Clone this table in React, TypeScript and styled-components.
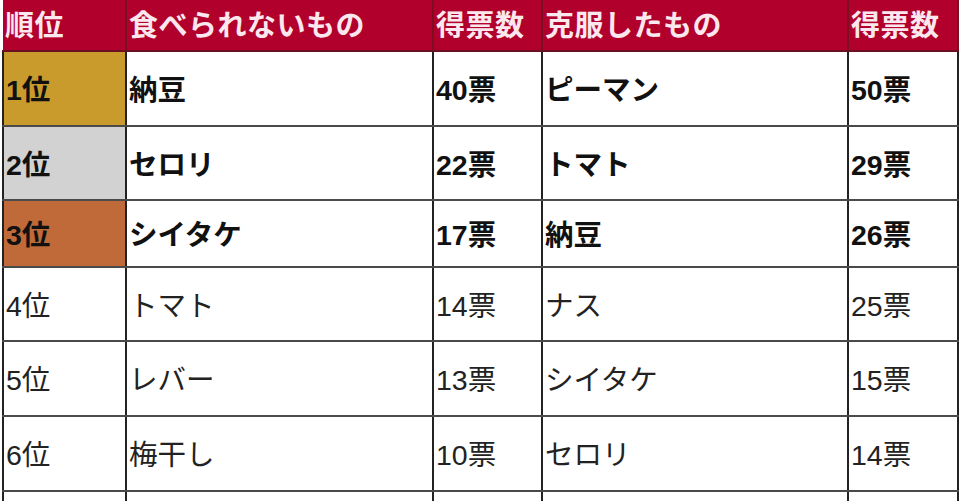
import React from "react";
import styled, { createGlobalStyle } from "styled-components";

const GlobalStyle = createGlobalStyle`
  html, body {
    margin: 0;
    padding: 0;
    background: #ffffff;
    overflow: hidden;
  }
`;

const Page = styled.div`
  width: 960px;
  height: 501px;
  overflow: hidden;
  padding-left: 2px;
  box-sizing: border-box;
`;

const Table = styled.table`
  border-collapse: collapse;
  table-layout: fixed;
  width: 955px;
  font-family: "Liberation Sans", "Noto Sans CJK JP", sans-serif;
  color: #111;
`;

const HeadCell = styled.th`
  background: #b1002c;
  color: #fbe8ee;
  font-size: 29px;
  font-weight: 700;
  text-align: left;
  padding: 0 0 4px 2px;
  height: 46px;
  border-right: 2px solid #7a0f22;
  border-bottom: 2px solid #6a1020;
  white-space: nowrap;
  overflow: hidden;
  letter-spacing: 0.5px;
`;

const Cell = styled.td<{ $bold?: boolean; $bg?: string }>`
  background: ${(p) => p.$bg || "#ffffff"};
  font-size: 28.5px;
  font-weight: ${(p) => (p.$bold ? 700 : 400)};
  color: ${(p) => (p.$bold ? "#111" : "#222")};
  text-align: left;
  padding: 0 0 2px 2px;
  border: 2px solid #4a4a4a;
  border-left-color: #222;
  border-right-color: #222;
  white-space: nowrap;
  overflow: hidden;
`;

const Row = styled.tr<{ $h: number }>`
  height: ${(p) => p.$h}px;
`;

type Item = {
  rank: string;
  cant: string;
  cantVotes: string;
  beat: string;
  beatVotes: string;
  bg?: string;
  h: number;
};

const rows: Item[] = [
  { rank: "1位", cant: "納豆", cantVotes: "40票", beat: "ピーマン", beatVotes: "50票", bg: "#c99b2d", h: 75 },
  { rank: "2位", cant: "セロリ", cantVotes: "22票", beat: "トマト", beatVotes: "29票", bg: "#d2d2d2", h: 74 },
  { rank: "3位", cant: "シイタケ", cantVotes: "17票", beat: "納豆", beatVotes: "26票", bg: "#c06a3a", h: 67 },
  { rank: "4位", cant: "トマト", cantVotes: "14票", beat: "ナス", beatVotes: "25票", h: 74 },
  { rank: "5位", cant: "レバー", cantVotes: "13票", beat: "シイタケ", beatVotes: "15票", h: 75 },
  { rank: "6位", cant: "梅干し", cantVotes: "10票", beat: "セロリ", beatVotes: "14票", h: 75 },
  { rank: "", cant: "", cantVotes: "", beat: "", beatVotes: "", h: 75 },
];

const App: React.FC = () => {
  return (
    <Page>
      <GlobalStyle />
      <Table>
        <colgroup>
          <col style={{ width: 123 }} />
          <col style={{ width: 307 }} />
          <col style={{ width: 109 }} />
          <col style={{ width: 306 }} />
          <col style={{ width: 110 }} />
        </colgroup>
        <thead>
          <tr>
            <HeadCell>順位</HeadCell>
            <HeadCell>食べられないもの</HeadCell>
            <HeadCell>得票数</HeadCell>
            <HeadCell>克服したもの</HeadCell>
            <HeadCell>得票数</HeadCell>
          </tr>
        </thead>
        <tbody>
          {rows.map((r, i) => {
            const bold = i < 3;
            return (
              <Row key={i} $h={r.h}>
                <Cell $bold={bold} $bg={r.bg}>{r.rank}</Cell>
                <Cell $bold={bold}>{r.cant}</Cell>
                <Cell $bold={bold}>{r.cantVotes}</Cell>
                <Cell $bold={bold}>{r.beat}</Cell>
                <Cell $bold={bold}>{r.beatVotes}</Cell>
              </Row>
            );
          })}
        </tbody>
      </Table>
    </Page>
  );
};

export default App;
